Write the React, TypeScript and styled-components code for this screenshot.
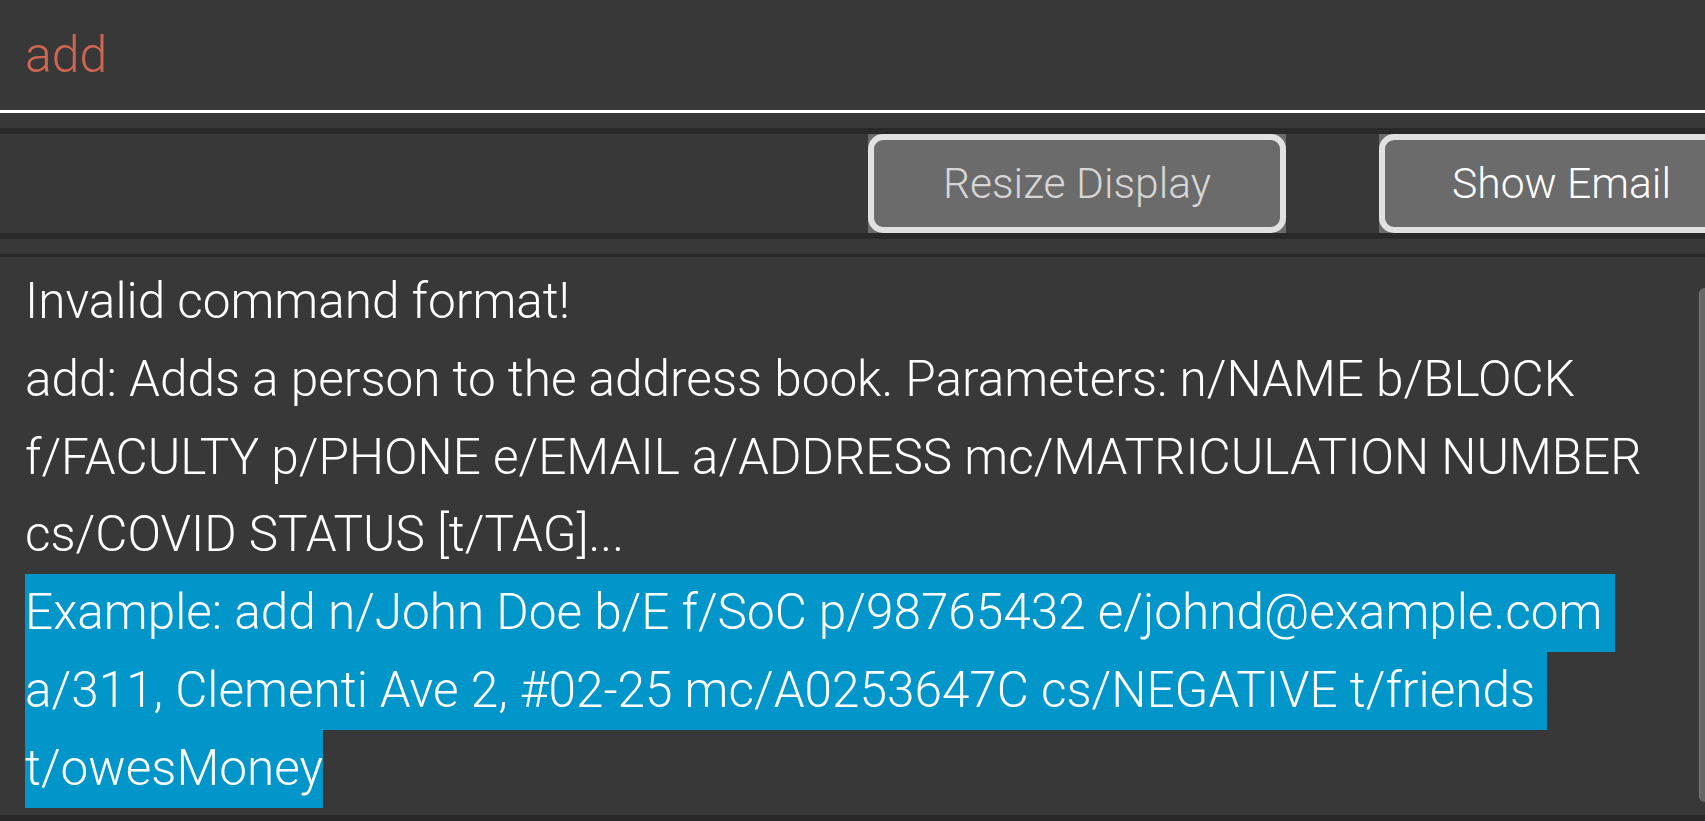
import React from 'react';
import styled, { createGlobalStyle } from 'styled-components';

const Global = createGlobalStyle`
  html, body {
    margin: 0;
    padding: 0;
    background: #383838;
    overflow: hidden;
  }
  body {
    font-family: Roboto, "Open Sans", sans-serif;
    font-weight: 300;
  }
`;

const Window = styled.div`
  width: 1705px;
  height: 821px;
  display: flex;
  flex-direction: column;
  background: #383838;
  overflow: hidden;
`;

const CommandBox = styled.div`
  height: 110px;
  flex: none;
  border-bottom: 3px solid #ffffff;
  padding-left: 25px;
  font-size: 50px;
  line-height: 110px;
  color: #d06651;
  white-space: pre;
`;

const Gap = styled.div<{ $h: number }>`
  height: ${(p) => p.$h}px;
  flex: none;
  background: #383838;
`;

const Divider = styled.div<{ $h: number }>`
  height: ${(p) => p.$h}px;
  flex: none;
  background: #292929;
`;

const ButtonBar = styled.div`
  height: 99px;
  flex: none;
  display: flex;
  justify-content: flex-end;
  gap: 93px;
  margin-right: -39px;
`;

const Button = styled.button<{ $w: number; $active?: boolean }>`
  width: ${(p) => p.$w}px;
  height: 99px;
  flex: none;
  padding: 0;
  margin: 0;
  border: none;
  background: #6b6b6b;
  font-family: Roboto, "Open Sans", sans-serif;
  font-weight: 300;
  font-size: 42.6px;
  color: ${(p) => (p.$active ? '#ffffff' : '#d6d6d6')};
  cursor: pointer;
`;

const ButtonFrame = styled.span`
  display: flex;
  align-items: center;
  justify-content: center;
  box-sizing: border-box;
  width: 100%;
  height: 100%;
  border: 6px solid #e1e1e1;
  border-radius: 15px;
  padding-bottom: 2px;
`;

const ResultPane = styled.div`
  height: 558px;
  flex: none;
  display: flex;
  background: #383838;
  overflow: hidden;
`;

const ResultText = styled.div`
  flex: 1;
  padding: 6px 0 0 25px;
  font-size: 49.5px;
  line-height: 77.8px;
  color: #ffffff;
`;

const TextLine = styled.div`
  height: 77.8px;
  white-space: pre;
`;

const Selected = styled.span`
  display: inline-block;
  background: #0096c9;
  color: #ffffff;
  height: 77.8px;
`;

const ScrollTrack = styled.div`
  width: 6px;
  flex: none;
  display: flex;
  flex-direction: column;
  padding: 31px 0 13px;
`;

const ScrollThumb = styled.div`
  flex: 1;
  background: #676767;
  border-radius: 7px 0 0 7px;
  border-left: 1px solid #7a7a7a;
`;

const lines: { text: string; selected?: boolean }[] = [
  { text: 'Invalid command format!' },
  { text: 'add: Adds a person to the address book. Parameters: n/NAME b/BLOCK' },
  { text: 'f/FACULTY p/PHONE e/EMAIL a/ADDRESS mc/MATRICULATION NUMBER' },
  { text: 'cs/COVID STATUS [t/TAG]...' },
  { text: 'Example: add n/John Doe b/E f/SoC p/98765432 e/johnd@example.com ', selected: true },
  { text: 'a/311, Clementi Ave 2, #02-25 mc/A0253647C cs/NEGATIVE t/friends ', selected: true },
  { text: 't/owesMoney', selected: true },
];

export default function App() {
  return (
    <>
      <Global />
      <Window>
        <CommandBox>add</CommandBox>
        <Gap $h={15} />
        <Divider $h={6} />
        <ButtonBar>
          <Button $w={418}>
            <ButtonFrame>Resize Display</ButtonFrame>
          </Button>
          <Button $w={365} $active>
            <ButtonFrame>Show Email</ButtonFrame>
          </Button>
        </ButtonBar>
        <Divider $h={6} />
        <Gap $h={15} />
        <Divider $h={3} />
        <ResultPane>
          <ResultText>
            {lines.map((l, i) => (
              <TextLine key={i}>{l.selected ? <Selected>{l.text}</Selected> : l.text}</TextLine>
            ))}
          </ResultText>
          <ScrollTrack>
            <ScrollThumb />
          </ScrollTrack>
        </ResultPane>
        <Divider $h={6} />
      </Window>
    </>
  );
}
